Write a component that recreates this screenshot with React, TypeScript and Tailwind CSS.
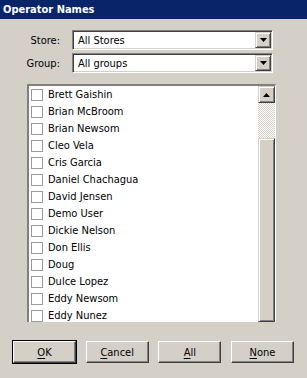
import React from 'react';

const operators = [
  'Brett Gaishin',
  'Brian McBroom',
  'Brian Newsom',
  'Cleo Vela',
  'Cris Garcia',
  'Daniel Chachagua',
  'David Jensen',
  'Demo User',
  'Dickie Nelson',
  'Don Ellis',
  'Doug',
  'Dulce Lopez',
  'Eddy Newsom',
  'Eddy Nunez',
];

const DownArrow = () => (
  <svg width="7" height="4" viewBox="0 0 7 4" className="block">
    <path d="M0 0h7L3.5 4z" fill="#000" />
  </svg>
);

const ComboBox: React.FC<{ value: string }> = ({ value }) => (
  <div className="flex h-[20px] w-[201px] border border-t-[#808080] border-l-[#808080] border-b-white border-r-white bg-white shadow-[inset_1px_1px_0_#404040,inset_-1px_-1px_0_#d4d0c8]">
    <div className="flex flex-1 items-center pl-[5px] pt-[1px]">{value}</div>
    <div className="m-[1px] flex w-[16px] items-center justify-center border border-t-[#d4d0c8] border-l-[#d4d0c8] border-b-[#404040] border-r-[#404040] bg-[#d4d0c8] shadow-[inset_1px_1px_0_#fff,inset_-1px_-1px_0_#808080]">
      <DownArrow />
    </div>
  </div>
);

const Button: React.FC<{ mnemonic: string; rest: string; isDefault?: boolean }> = ({ mnemonic, rest, isDefault }) => (
  <div className={isDefault ? 'border border-black' : 'border border-transparent'}>
    <div className="flex h-[22px] w-[63px] items-center justify-center border border-t-white border-l-white border-b-[#404040] border-r-[#404040] shadow-[inset_-1px_-1px_0_#808080]">
      <span>
        <span className="underline underline-offset-2">{mnemonic}</span>
        {rest}
      </span>
    </div>
  </div>
);

export default function App() {
  return (
    <div
      className="flex h-[378px] w-[307px] flex-col overflow-hidden bg-[#d4d0c8] text-[11px] leading-none text-black"
      style={{ fontFamily: '"DejaVu Sans Condensed", "DejaVu Sans", Tahoma, sans-serif' }}
    >
      <div className="flex h-[19px] items-center bg-[#0a246a] px-[3px] font-bold text-white">Operator Names</div>

      <div className="mt-[11px] flex items-center">
        <div className="w-[60px] text-right">Store:</div>
        <div className="ml-[12px]">
          <ComboBox value="All Stores" />
        </div>
      </div>
      <div className="mt-[3px] flex items-center">
        <div className="w-[60px] text-right">Group:</div>
        <div className="ml-[12px]">
          <ComboBox value="All groups" />
        </div>
      </div>

      <div className="ml-[27px] mt-[11px] flex h-[238px] w-[249px] overflow-hidden border-t-2 border-l-2 border-r border-t-[#808080] border-l-[#808080] border-r-white bg-white">
        <div className="flex flex-1 flex-col">
          {operators.map((name) => (
            <div key={name} className="flex h-[17px] shrink-0 items-center">
              <div className="ml-[2px] h-[12px] w-[12px] border border-[#9a9a9a] bg-white" />
              <span className="ml-[5px]">{name}</span>
            </div>
          ))}
        </div>
        <div className="flex w-[17px] flex-col bg-[#d4d0c8]">
          <div className="flex h-[17px] items-center justify-center border border-t-[#d4d0c8] border-l-[#d4d0c8] border-b-[#404040] border-r-[#404040] shadow-[inset_1px_1px_0_#fff,inset_-1px_-1px_0_#808080]">
            <svg width="7" height="4" viewBox="0 0 7 4" className="block">
              <path d="M3.5 0L7 4H0z" fill="#000" />
            </svg>
          </div>
          <div className="h-[35px] bg-[image:repeating-conic-gradient(#d4d0c8_0_25%,#ffffff_0_50%)] bg-[length:2px_2px]" />
          <div className="flex-1 border border-t-[#d4d0c8] border-l-[#d4d0c8] border-b-[#404040] border-r-[#404040] shadow-[inset_1px_1px_0_#fff,inset_-1px_-1px_0_#808080]" />
        </div>
      </div>

      <div className="mt-[18px] flex justify-between px-[12px]">
        <Button mnemonic="O" rest="K" isDefault />
        <Button mnemonic="C" rest="ancel" />
        <Button mnemonic="A" rest="ll" />
        <Button mnemonic="N" rest="one" />
      </div>
    </div>
  );
}
